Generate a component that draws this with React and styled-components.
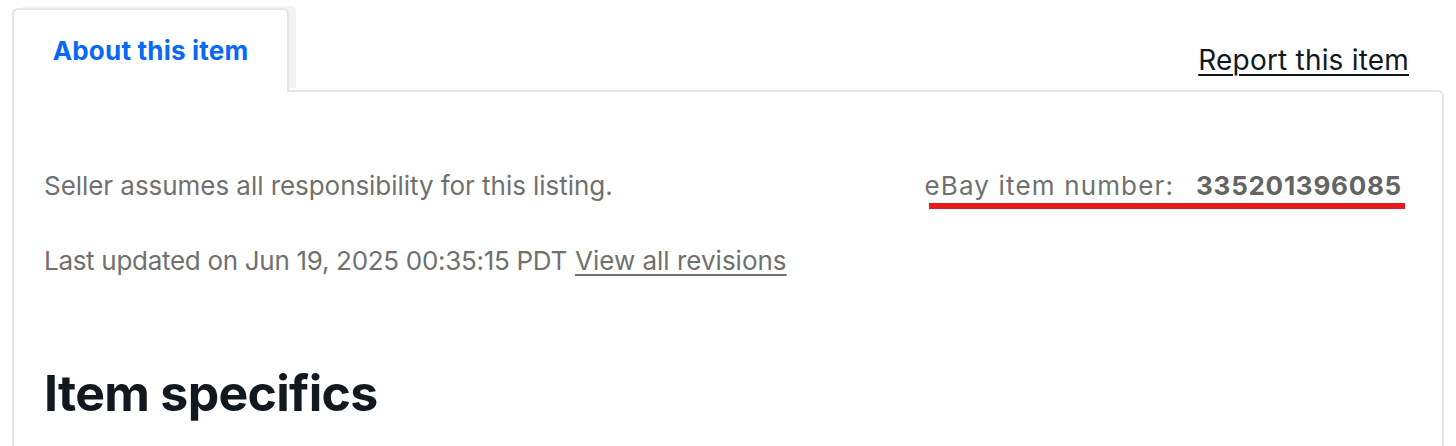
import React from "react";
import styled, { createGlobalStyle } from "styled-components";

const Global = createGlobalStyle`
  body {
    margin: 0;
    background: #fff;
    font-family: Inter, "Open Sans", Arial, sans-serif;
  }
`;

const Page = styled("div")`
  padding: 8px 12px 0 12px;
  width: 1432px;
  height: 446px;
  overflow: hidden;
  box-sizing: content-box;
`;

const Header = styled("div")`
  display: flex;
  justify-content: space-between;
  align-items: flex-end;
  position: relative;
  z-index: 2;
`;

const Tab = styled("div")`
  width: 277px;
  height: 84px;
  display: flex;
  align-items: center;
  justify-content: center;
  box-sizing: border-box;
  padding-bottom: 2px;
  border: 2px solid #e5e5e5;
  border-bottom: none;
  border-radius: 6px 6px 0 0;
  background: #fff;
  box-shadow: 8px -3px 0 -1px #f2f2f2;
  color: #0968f6;
  font-size: 26px;
  font-weight: 700;
  letter-spacing: 0.2px;
`;

const ReportLink = styled("a")`
  margin: 0 35px 15px 0;
  color: #111820;
  font-size: 28px;
  letter-spacing: 0.2px;
  text-decoration: underline;
  text-underline-offset: 4px;
  text-decoration-thickness: 2px;
`;

const Panel = styled("div")`
  margin-top: -2px;
  border: 2px solid #e5e5e5;
  border-bottom: none;
  border-radius: 0 6px 0 0;
  padding: 78px 40px 0 30px;
  height: 400px;
`;

const Row = styled("div")`
  display: flex;
  justify-content: space-between;
  align-items: baseline;
  line-height: 32px;
  margin-bottom: ${props => props.gap || 0}px;
`;

const Muted = styled("span")`
  color: #707070;
  font-size: 26px;
  letter-spacing: ${props => props.spacing || -0.05}px;
`;

const ItemNumber = styled("span")`
  position: relative;
  display: inline-flex;
  align-items: baseline;
  gap: 22px;
  color: #707070;
  font-size: 26px;
  letter-spacing: 1.15px;

  &::after {
    content: "";
    position: absolute;
    left: 4px;
    right: -3px;
    bottom: -7px;
    height: 6px;
    background: #e61c1c;
  }
`;

const Strong = styled("b")`
  color: #646464;
  font-weight: 700;
  letter-spacing: 0.75px;
`;

const Revisions = styled("a")`
  margin-left: 8px;
  color: #707070;
  letter-spacing: 0;
  text-decoration: underline;
  text-underline-offset: 4px;
`;

const Heading = styled("h2")`
  margin: 86px 0 0 0;
  color: #111820;
  font-size: 50px;
  line-height: 60px;
  font-weight: 700;
  letter-spacing: -0.7px;
`;

export default function App() {
  return (
    <>
      <Global />
      <Page>
        <Header>
          <Tab>About this item</Tab>
          <ReportLink href="#">Report this item</ReportLink>
        </Header>
        <Panel>
          <Row gap={43}>
            <Muted>Seller assumes all responsibility for this listing.</Muted>
            <ItemNumber>
              eBay item number:<Strong>335201396085</Strong>
            </ItemNumber>
          </Row>
          <Row>
            <Muted spacing={-0.3}>
              Last updated on Jun 19, 2025 00:35:15 PDT
              <Revisions href="#">View all revisions</Revisions>
            </Muted>
          </Row>
          <Heading>Item specifics</Heading>
        </Panel>
      </Page>
    </>
  );
}
